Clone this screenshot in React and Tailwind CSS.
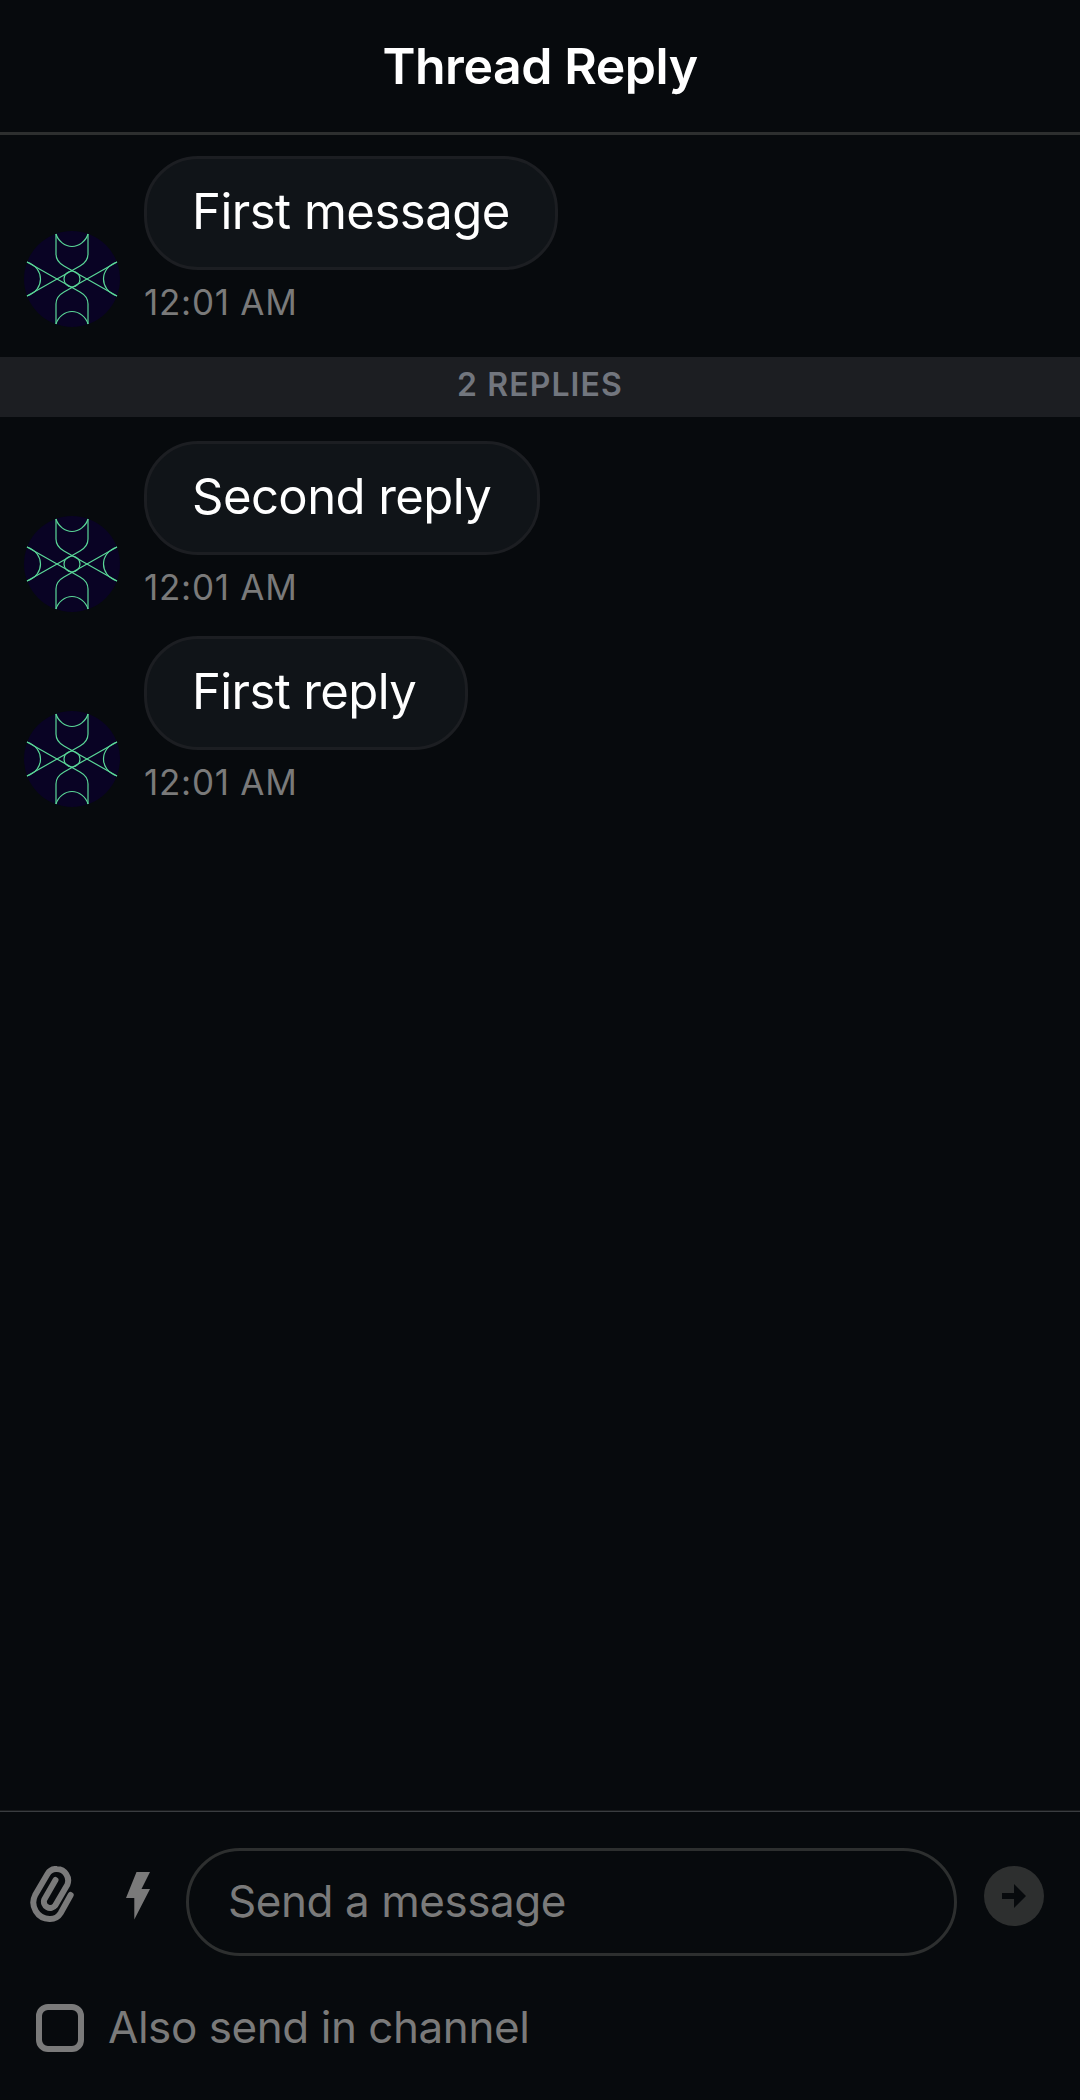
const font = "font-[Inter,'Liberation_Sans',sans-serif]";

function Avatar() {
  return (
    <svg className="size-24 shrink-0" viewBox="0 0 96 96" fill="none">
      <circle cx="48" cy="48" r="48" fill="#090324" />
      <g stroke="#5ad898" strokeWidth="1.2">
        <path d="M32 3V23C32 29 35.500 32.500 40 35L93 65M64 3V23C64 29 60.500 32.500 56 35L3 65" />
        <path d="M32 93V73C32 67 35.500 63.500 40 61L93 31M64 93V73C64 67 60.500 63.500 56 61L3 31" />
        <path d="M32 3C34 10 41 15.500 48 15.500S62 10 64 3M32 93C34 86 41 80.500 48 80.500S62 86 64 93" />
        <path d="M3 31C12 34 16.500 41 16.500 48S12 62 3 65M93 31C84 34 79.500 41 79.500 48S84 62 93 65" />
        <circle cx="48" cy="48" r="8" />
      </g>
    </svg>
  );
}

function Message({ text, bubbleClass }) {
  return (
    <div className="flex h-[171px] items-end gap-6 pl-6">
      <Avatar />
      <div className="flex h-full flex-col items-start">
        <div className={`flex h-[114px] items-center rounded-[54px] border-[3px] border-[#1c1e22] bg-[#101418] pb-[3px] pl-[45px] text-white ${bubbleClass}`}>
          <span className="whitespace-nowrap text-[49px] leading-none">{text}</span>
        </div>
        <span className="mt-[14px] whitespace-nowrap text-[35px] leading-[36px] tracking-[0.75px] text-[#7a7a7a]">12:01 AM</span>
      </div>
    </div>
  );
}

export default function App() {
  return (
    <div className={`flex h-[2100px] w-[1080px] flex-col overflow-hidden bg-[#070a0d] ${font}`}>
      <header className="flex h-[135px] shrink-0 items-center justify-center border-b-[3px] border-[#2d2f2f]">
        <h1 className="whitespace-nowrap text-[50px] font-semibold leading-none tracking-[-0.45px] text-white">Thread Reply</h1>
      </header>
      <main className="flex flex-1 flex-col pt-[21px]">
        <Message text="First message" bubbleClass="w-[414px] tracking-[-0.5px]" />
        <div className="mt-[30px] mb-6 flex h-[60px] items-center justify-center bg-[#1c1e22] pb-1">
          <span className="whitespace-nowrap text-[32px] font-semibold leading-none tracking-[1.1px] text-[#72767e]">2 REPLIES</span>
        </div>
        <div className="flex flex-col gap-6">
          <Message text="Second reply" bubbleClass="w-[396px] tracking-[-0.55px]" />
          <Message text="First reply" bubbleClass="w-[324px] tracking-[-0.6px]" />
        </div>
      </main>
      <footer className="h-[289px] shrink-0 border-t border-[#3a3d40] pt-9 shadow-[0_-1px_0_#1a1c1e]">
        <div className="flex h-[108px] items-center">
          <svg className="ml-[27px] mb-3 h-[60px] w-[51px] shrink-0" viewBox="27 1866 51 60" fill="none" stroke="#7a7a7a" strokeWidth="6" strokeLinecap="round">
            <path d="M70.700 1895L60.700 1913A12.500 12.500 0 0 1 49.500 1919A16.500 16.500 0 0 1 35.200 1895L47.500 1874A10 10 0 0 1 57 1869A11.500 11.500 0 0 1 67.200 1885L55.200 1905.500A6.300 6.300 0 0 1 44.300 1899.500L55.500 1880" />
          </svg>
          <svg className="ml-[48px] mb-3 h-[48px] w-6 shrink-0" viewBox="126 1872 24 48" fill="#7a7a7a">
            <path d="M136.500 1872H150L141.500 1889H150L134.300 1919.500V1898H126Z" />
          </svg>
          <div className="ml-9 flex h-[108px] w-[771px] items-center rounded-[54px] border-[3px] border-[#2d2f2f] pb-0.5 pl-[39px]">
            <span className="whitespace-nowrap text-[44px] leading-none tracking-[-0.45px] text-[#7a7a7a]">Send a message</span>
          </div>
          <svg className="ml-[27px] mb-3 size-[60px] shrink-0" viewBox="0 0 60 60">
            <circle cx="30" cy="30" r="30" fill="#2d2f2f" />
            <path d="M18 27H30V18L42 30L30 42V33H18Z" fill="#070a0d" />
          </svg>
        </div>
        <div className="mt-12 flex h-12 items-center pl-9">
          <div className="size-12 rounded-[12px] border-[6px] border-[#7a7a7a]" />
          <span className="ml-[24px] pb-0.5 whitespace-nowrap text-[44px] leading-none tracking-[-0.45px] text-[#7a7a7a]">Also send in channel</span>
        </div>
      </footer>
    </div>
  );
}
